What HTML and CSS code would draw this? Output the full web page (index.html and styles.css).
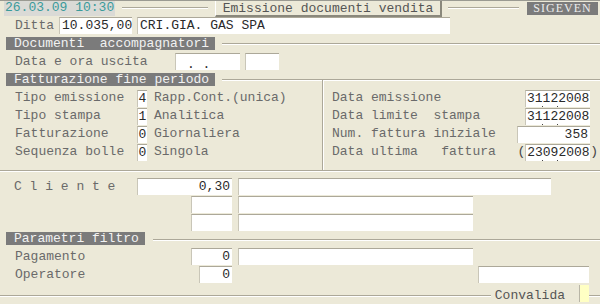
FILE: index.html
```html
<!DOCTYPE html>
<html lang="it">
<head>
    <meta charset="UTF-8">
    <title>Emissione documenti vendita</title>
    <link rel="stylesheet" href="styles.css">
</head>
<body>
    <div class="screen">
        <div class="titlebar">
            <div class="clock">26.03.09 10:30</div>
            <div class="rule rule-a"></div>
            <div class="title">Emissione documenti vendita</div>
            <div class="rule rule-b"></div>
            <div class="code">SIGEVEN</div>
        </div>

        <div class="row row-ditta">
            <span class="label lbl-ditta">Ditta</span>
            <span class="field f-ditta">10.035,00</span>
            <span class="field f-ragsoc">CRI.GIA. GAS SPA</span>
        </div>

        <div class="section">
            <div class="section-title st-wide">Documenti  accompagnatori</div>
            <div class="rule"></div>
        </div>

        <div class="row row-uscita">
            <span class="label lbl-uscita">Data e ora uscita</span>
            <span class="field f-data-uscita"><span class="low">. .</span></span>
            <span class="field f-ora-uscita"></span>
        </div>

        <div class="section">
            <div class="section-title st-wide">Fatturazione fine periodo</div>
            <div class="rule"></div>
        </div>

        <div class="billing">
            <div class="billing-left">
                <div class="brow">
                    <span class="label lbl-bill">Tipo emissione</span>
                    <span class="field f-code">4</span>
                    <span class="desc">Rapp.Cont.(unica)</span>
                </div>
                <div class="brow">
                    <span class="label lbl-bill">Tipo stampa</span>
                    <span class="field f-code">1</span>
                    <span class="desc">Analitica</span>
                </div>
                <div class="brow">
                    <span class="label lbl-bill">Fatturazione</span>
                    <span class="field f-code">0</span>
                    <span class="desc">Giornaliera</span>
                </div>
                <div class="brow">
                    <span class="label lbl-bill">Sequenza bolle</span>
                    <span class="field f-code">0</span>
                    <span class="desc">Singola</span>
                </div>
            </div>
            <div class="billing-right">
                <div class="brow">
                    <span class="label">Data emissione</span>
                    <span class="field f-date">31<i class="dot"></i>12<i class="dot"></i>2008</span>
                </div>
                <div class="brow">
                    <span class="label">Data limite  stampa</span>
                    <span class="field f-date">31<i class="dot"></i>12<i class="dot"></i>2008</span>
                </div>
                <div class="brow">
                    <span class="label">Num. fattura iniziale</span>
                    <span class="field f-number">358</span>
                </div>
                <div class="brow">
                    <span class="label">Data ultima   fattura</span>
                    <span class="paren-wrap">(<span class="field f-date f-plain">23<i class="dot"></i>09<i class="dot"></i>2008</span>)</span>
                </div>
            </div>
        </div>

        <div class="customer">
            <div class="crow crow-first">
                <span class="label lbl-cliente">C l i e n t e</span>
                <span class="field f-cliente">0,30</span>
                <span class="field f-cliente-desc"></span>
            </div>
            <div class="crow crow-indent">
                <span class="field f-small"></span>
                <span class="field f-mid"></span>
            </div>
            <div class="crow crow-indent">
                <span class="field f-small"></span>
                <span class="field f-mid"></span>
            </div>
        </div>

        <div class="section section-filter">
            <div class="section-title st-narrow">Parametri filtro</div>
            <div class="rule rule-filter"></div>
        </div>

        <div class="row row-pagamento">
            <span class="label lbl-pagamento">Pagamento</span>
            <span class="field f-small f-right">0</span>
            <span class="field f-mid"></span>
        </div>
        <div class="row row-operatore">
            <span class="label lbl-operatore">Operatore</span>
            <span class="field f-operatore f-right">0</span>
            <span class="field f-operatore-desc"></span>
        </div>

        <div class="footer">
            <div class="rule rule-foot"></div>
            <span class="confirm">Convalida</span>
            <span class="confirm-box"></span>
            <div class="rule rule-end"></div>
        </div>
    </div>
</body>
</html>
```

FILE: styles.css
```css
body {
    margin: 0;
    background: #ece9d8;
    font-family: "Liberation Mono", "Courier New", monospace;
    font-size: 13px;
    line-height: 16px;
    color: #6a6a6a;
}

.screen {
    width: 600px;
    height: 304px;
    overflow: hidden;
    border-top: 1px solid #9a9a92;
    box-sizing: border-box;
}

.label { white-space: pre; }

.rule {
    flex: 1;
    height: 0;
    border-top: 1px solid #aca899;
    border-bottom: 1px solid #fff;
}

/* title bar */
.titlebar {
    display: flex;
    align-items: center;
    height: 16px;
    margin-top: -1px;
}
.clock {
    margin-left: 4px;
    width: 111px;
    height: 16px;
    padding-left: 1px;
    box-sizing: border-box;
    background: #dadad6;
    color: #3a9b9b;
}
.rule-a { flex: none; width: 86px; margin: 0 7px; }
.rule-b { flex: none; width: 71px; margin: 0 8px 0 6px; }
.title {
    width: 227px;
    height: 17px;
    box-sizing: border-box;
    text-align: center;
    color: #555;
    border-top: 1px solid #fff;
    border-left: 1px solid #fff;
    border-right: 2px solid #8a887c;
    border-bottom: 2px solid #8a887c;
}
.code {
    width: 71px;
    height: 13px;
    background: #7b7b7b;
    color: #ececec;
    font-family: "Liberation Serif", "Times New Roman", serif;
    font-size: 12px;
    line-height: 13px;
    letter-spacing: 1px;
    text-align: center;
}

/* fields */
.field {
    display: block;
    height: 17px;
    box-sizing: border-box;
    background: #fff;
    border-top: 1px solid #aca899;
    border-left: 1px solid #c9c6b8;
    padding: 0 1px;
    color: #2a2a2a;
    white-space: pre;
}
.f-right { text-align: right; padding-right: 2px; }

.row {
    display: flex;
    align-items: center;
    padding-left: 15px;
}

.row-ditta { margin-top: 1px; height: 17px; }
.lbl-ditta { width: 44px; }
.f-ditta { width: 73px; padding-left: 2px; }
.f-ragsoc { width: 313px; margin-left: 5px; padding-left: 2px; }

/* section headers */
.section {
    display: flex;
    align-items: center;
    height: 13px;
    margin-top: 3px;
    margin-left: 6px;
}
.section-title {
    height: 13px;
    line-height: 13px;
    padding-left: 8px;
    box-sizing: border-box;
    background: #7b7b7b;
    color: #f2f2f2;
    white-space: pre;
}
.st-wide { width: 209px; }
.st-narrow { width: 139px; }
.section .rule { margin-left: 7px; }

.row-uscita { margin-top: 3px; height: 17px; }
.lbl-uscita { width: 160px; }
.f-data-uscita { width: 65px; padding-left: 11px; }
.f-data-uscita .low { position: relative; top: 3px; }
.f-ora-uscita { width: 34px; margin-left: 5px; }

/* fatturazione */
.billing {
    display: flex;
    height: 84px;
    border-bottom: 1px solid #aca899;
    box-shadow: 0 1px 0 #fff;
}
.billing-left {
    width: 307px;
    padding: 3px 0 0 15px;
}
.billing-right {
    flex: 1;
    margin-top: -6px;
    padding: 9px 0 0 9px;
    border-left: 1px solid #aca899;
    box-shadow: inset 1px 0 0 #fff;
}
.brow {
    display: flex;
    align-items: center;
    height: 18px;
}
.lbl-bill { width: 122px; }
.f-code { width: 10px; padding: 0; text-align: center; }
.desc { margin-left: 7px; white-space: pre; }

.f-date { margin-left: auto; margin-right: 10px; width: 65px; padding-left: 1px; }
.f-number { margin-left: auto; margin-right: 10px; width: 73px; text-align: right; padding-right: 2px; }
.paren-wrap { margin-left: auto; margin-right: 2px; display: flex; color: #444; }
.paren-wrap .f-plain { margin: 0; }
.dot {
    display: inline-block;
    position: relative;
    width: 0;
    height: 16px;
    vertical-align: top;
}
.dot::after {
    content: "";
    position: absolute;
    left: -1px;
    bottom: 0;
    width: 1px;
    height: 1px;
    background: #444;
}

/* cliente */
.customer { margin-top: 7px; }
.crow {
    display: flex;
    align-items: center;
    height: 17px;
    margin-bottom: 1px;
}
.crow-first { padding-left: 14px; }
.crow-indent { padding-left: 191px; }
.lbl-cliente { width: 123px; }
.f-cliente { width: 95px; text-align: right; padding-right: 2px; }
.f-cliente-desc { width: 313px; margin-left: 6px; }
.f-small { width: 41px; }
.f-mid { width: 235px; margin-left: 6px; }

/* parametri filtro */
.section-filter { margin-top: 1px; }
.section .rule-filter { margin-left: 8px; margin-top: 3px; }

.row-pagamento { margin-top: 3px; height: 17px; }
.lbl-pagamento { width: 176px; }
.row-operatore { margin-top: 1px; height: 17px; }
.lbl-operatore { width: 184px; }
.f-operatore { width: 33px; }
.f-operatore-desc { width: 111px; margin-left: auto; margin-right: 11px; }

/* footer */
.footer {
    display: flex;
    align-items: center;
    height: 17px;
    margin-top: 2px;
}
.rule-foot, .rule-end { margin-top: 5px; }
.rule-end { flex: none; width: 11px; }
.confirm {
    margin: 0 14px 0 4px;
    color: #555;
    line-height: 13px;
    margin-top: 3px;
}
.confirm-box {
    width: 10px;
    height: 17px;
    box-sizing: border-box;
    background: #ffffc4;
    border-left: 1px solid #b8b5a6;
}
```
